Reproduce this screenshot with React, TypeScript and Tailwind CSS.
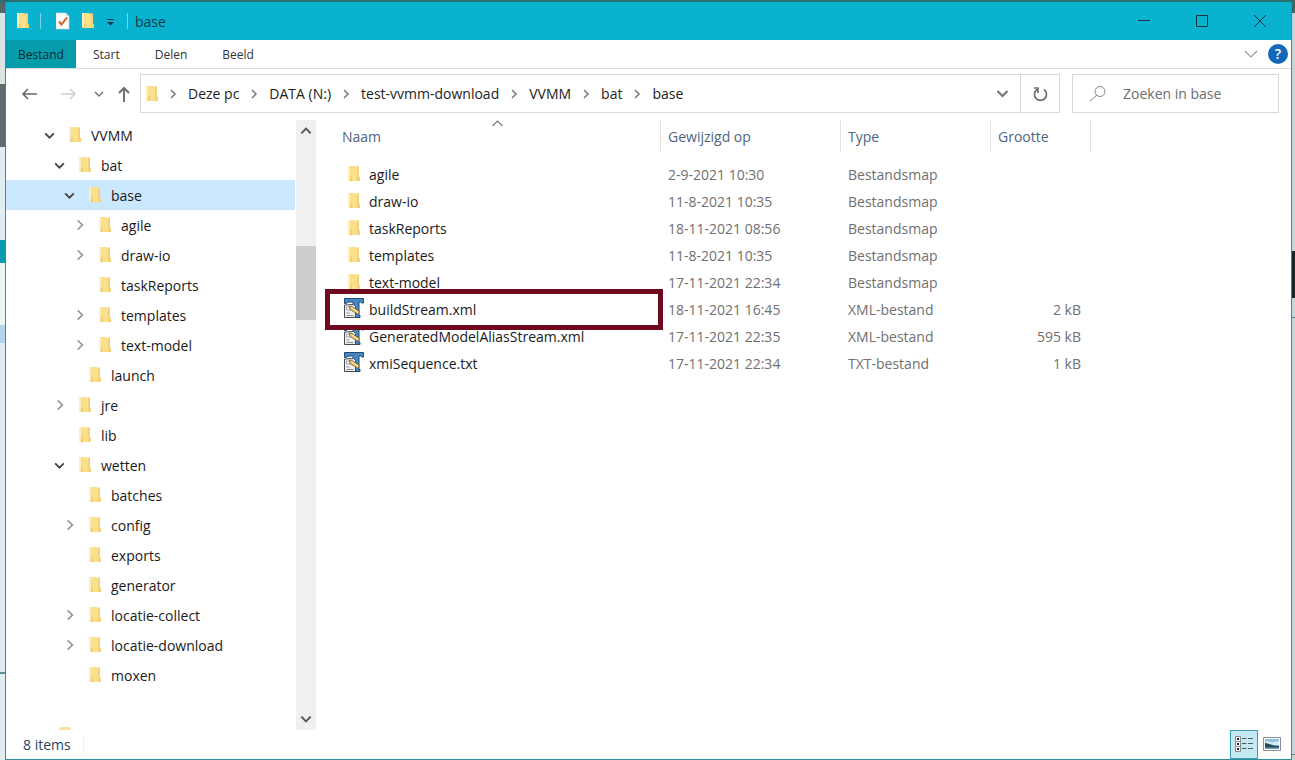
import type { ReactNode } from "react";

type TreeItem = { name: string; level: number; state?: "open" | "closed"; selected?: boolean };

const tree: TreeItem[] = [
  { name: "VVMM", level: 0, state: "open" },
  { name: "bat", level: 1, state: "open" },
  { name: "base", level: 2, state: "open", selected: true },
  { name: "agile", level: 3, state: "closed" },
  { name: "draw-io", level: 3, state: "closed" },
  { name: "taskReports", level: 3 },
  { name: "templates", level: 3, state: "closed" },
  { name: "text-model", level: 3, state: "closed" },
  { name: "launch", level: 2 },
  { name: "jre", level: 1, state: "closed" },
  { name: "lib", level: 1 },
  { name: "wetten", level: 1, state: "open" },
  { name: "batches", level: 2 },
  { name: "config", level: 2, state: "closed" },
  { name: "exports", level: 2 },
  { name: "generator", level: 2 },
  { name: "locatie-collect", level: 2, state: "closed" },
  { name: "locatie-download", level: 2, state: "closed" },
  { name: "moxen", level: 2 },
];

const files = [
  { name: "agile", date: "2-9-2021 10:30", type: "Bestandsmap", size: "" },
  { name: "draw-io", date: "11-8-2021 10:35", type: "Bestandsmap", size: "" },
  { name: "taskReports", date: "18-11-2021 08:56", type: "Bestandsmap", size: "" },
  { name: "templates", date: "11-8-2021 10:35", type: "Bestandsmap", size: "" },
  { name: "text-model", date: "17-11-2021 22:34", type: "Bestandsmap", size: "" },
  { name: "buildStream.xml", date: "18-11-2021 16:45", type: "XML-bestand", size: "2 kB", marked: true },
  { name: "GeneratedModelAliasStream.xml", date: "17-11-2021 22:35", type: "XML-bestand", size: "595 kB" },
  { name: "xmiSequence.txt", date: "17-11-2021 22:34", type: "TXT-bestand", size: "1 kB" },
];

const crumbs = ["Deze pc", "DATA (N:)", "test-vvmm-download", "VVMM", "bat", "base"];

const FolderIcon = () => (
  <svg className="shrink-0" width="14" height="18" viewBox="0 0 14 18">
    <path d="M1 1h7v15H2l-1-1z" fill="#f8df97" />
    <path d="M1 1h2v14.500l-2-.500z" fill="#fdeebf" />
    <path d="M4 1.500h8v10l1 1V16H4z" fill="#fbe08c" />
    <path d="M10 1.500h2v10l1 1V16h-3z" fill="#f4d27a" />
    <path d="M3 12l1.500-2v6.500L3 16z" fill="#f0c865" />
  </svg>
);

// Text editor document icon: blue T behind a notepad with a pencil
const EditorIcon = () => (
  <svg className="mb-[2px] shrink-0" width="20" height="20" viewBox="0 0 20 20">
    <path d="M.5.500h19V5H18l-1.500-1H15v13.500h1v2H9V4H4L2.500 5.500h-2z" fill="#4389c8" stroke="#25476a" />
    <path d="M.5 7l9-.500 2 2v11H.500z" fill="#f0f0ed" stroke="#444b52" />
    <path d="M2.500 17.500h7M2.500 15h3" stroke="#8a9299" fill="none" />
    <path d="M2.500 9h3.500v3H2.500z" fill="#fff" stroke="#8a9299" strokeWidth=".8" />
    <path d="M5.500 8l2.500.500 7.500 5-1.500 3-8-5z" fill="#efc56d" stroke="#5a4626" strokeWidth=".7" />
    <path d="M7.500 9.500l7 5" stroke="#fff0bd" />
  </svg>
);

type ChevronProps = { dir: "up" | "down" | "right"; size?: number; color?: string; weight?: number };

const chevronPaths = { up: "M2 8l4-4 4 4", down: "M2 4l4 4 4-4", right: "M4 2l4 4-4 4" };

const Chevron = ({ dir, size = 12, color = "#444", weight = 1.5 }: ChevronProps) => (
  <svg className="shrink-0" width={size} height={size} viewBox="0 0 12 12" fill="none" stroke={color} strokeWidth={weight}>
    <path d={chevronPaths[dir]} />
  </svg>
);

const TitleBar = () => (
  <header className="flex h-[38px] shrink-0 items-center bg-[#09b3cf] pl-[10px] text-[#123b47]">
    <FolderIcon />
    <div className="ml-[10px] h-4 w-px bg-[#7fd3e0]" />
    <button aria-label="Eigenschappen" className="ml-[15px]">
      <svg width="15" height="18" viewBox="0 0 15 18">
        <path d="M0 1h10l3 3v13H0z" fill="#fdfaf7" stroke="#d9e3e3" strokeWidth=".6" />
        <path d="M10 1v3h3" fill="#cdd6d6" />
        <path d="M3 9.500l2.500 3 5.500-7" fill="none" stroke="#d4612e" strokeWidth="2" />
      </svg>
    </button>
    <button aria-label="Nieuwe map" className="ml-[10px]">
      <FolderIcon />
    </button>
    <button aria-label="Werkbalk aanpassen" className="ml-[11px]">
      <svg width="9" height="10" viewBox="0 0 9 10">
        <path d="M1 3.500h7" stroke="#123b47" />
        <path d="M1 6h7L4.500 9.500z" fill="#123b47" />
      </svg>
    </button>
    <div className="ml-[12px] h-4 w-px bg-[#7fd3e0]" />
    <h1 className="ml-[7px] flex-1 text-[14px]">base</h1>
    <div className="flex h-full pr-[2px]">
      <button aria-label="Minimaliseren" className="flex w-[58px] items-center justify-center">
        <svg width="12" height="12" stroke="#15333c"><path d="M0 5.500h12" /></svg>
      </button>
      <button aria-label="Maximaliseren" className="flex w-[58px] items-center justify-center">
        <svg width="12" height="12" fill="none" stroke="#15333c"><path d="M.5.500h11v11H.500z" /></svg>
      </button>
      <button aria-label="Sluiten" className="flex w-[58px] items-center justify-center">
        <svg width="12" height="12" stroke="#15333c"><path d="M0 0l12 12M12 0L0 12" /></svg>
      </button>
    </div>
  </header>
);

const Ribbon = () => (
  <nav className="flex h-[29px] shrink-0 items-stretch border-b border-[#dadbdc] text-[12px] text-[#333]">
    <button className="w-[70px] bg-[#079cab] pt-[2px] text-[#0c2b33]">Bestand</button>
    <div className="flex gap-[35px] pt-[2px] pl-[17px]">
      <button>Start</button>
      <button>Delen</button>
      <button>Beeld</button>
    </div>
    <div className="flex flex-1 items-center justify-end gap-[8px] pr-[3px]">
      <button aria-label="Lint uitvouwen">
        <Chevron dir="down" size={18} color="#999" weight={0.8} />
      </button>
      <button aria-label="Help" className="size-5 rounded-full bg-[#1368b8] text-[14px] leading-5 font-semibold text-white">
        ?
      </button>
    </div>
  </nav>
);

const AddressBar = () => (
  <div className="flex h-[51px] shrink-0 items-start pt-[5px] pr-[12px] pl-[15px]">
    <div className="flex h-[39px] w-[119px] items-center">
      <button aria-label="Terug">
        <svg width="18" height="16" fill="none" stroke="#666" strokeWidth="1.500"><path d="M16 8H2M7 3L2 8l5 5" /></svg>
      </button>
      <button aria-label="Vooruit" className="ml-[22px]">
        <svg width="18" height="16" fill="none" stroke="#d0d0d0" strokeWidth="1.500"><path d="M0 8h14M9 3l5 5-5 5" /></svg>
      </button>
      <button aria-label="Recente locaties" className="ml-[14px]">
        <Chevron dir="down" size={12} color="#777" />
      </button>
      <button aria-label="Omhoog" className="ml-[11px] pt-[2px]">
        <svg width="16" height="18" fill="none" stroke="#707070" strokeWidth="2"><path d="M8 16V2M3 7l5-5 5 5" /></svg>
      </button>
    </div>
    <div className="flex h-[39px] min-w-0 flex-1 items-center border border-[#d9d9d9] pl-[4px]">
      <FolderIcon />
      <div className="flex flex-1 items-center pl-[2px] text-[14px] text-[#222]">
        {crumbs.map((crumb) => (
          <div key={crumb} className="flex items-center">
            <span className="flex w-[24px] justify-center">
              <Chevron dir="right" size={12} color="#777" />
            </span>
            <button className="px-[3px] whitespace-nowrap">{crumb}</button>
          </div>
        ))}
      </div>
      <button aria-label="Vorige locaties" className="flex h-full w-[36px] items-center justify-center">
        <Chevron dir="down" size={15} color="#777" weight={1.7} />
      </button>
      <button aria-label="Vernieuwen" className="flex h-full w-[39px] items-center justify-center border-l border-[#d9d9d9]">
        <svg width="16" height="18" viewBox="0 0 16 18" fill="none" stroke="#707070" strokeWidth="1.700">
          <path d="M12 4.500a6 6 0 1 1-7 0M2 3h4v5" />
        </svg>
      </button>
    </div>
    <label className="ml-[12px] flex h-[39px] w-[207px] items-center border border-[#d9d9d9] pl-[16px]">
      <svg className="shrink-0" width="18" height="18" fill="none" stroke="#888">
        <circle cx="11" cy="6.500" r="5" />
        <path d="M8 10L1 16" />
      </svg>
      <input
        aria-label="Zoeken in base"
        placeholder="Zoeken in base"
        className="ml-[16px] w-full min-w-0 text-[14px] outline-none placeholder:text-[#6d6d6d]"
      />
    </label>
  </div>
);

const FolderTree = () => (
  <aside className="flex w-[310px] shrink-0">
    <ul className="flex min-w-0 flex-1 flex-col overflow-hidden text-[14px] text-[#1a1a1a]">
      {tree.map((item) => (
        <li
          key={item.name + item.level}
          className={item.selected ? "mr-px h-[30px] shrink-0 bg-[#cce8ff]" : "h-[30px] shrink-0"}
          style={{ paddingLeft: 37 + item.level * 10 }}
        >
          <button className="flex h-full items-center">
            <span className="w-[25px]">
              {item.state === "open" && <Chevron dir="down" size={13} weight={1.7} />}
              {item.state === "closed" && <Chevron dir="right" size={14} color="#999" />}
            </span>
            <FolderIcon />
            <span className="ml-[9px]">{item.name}</span>
          </button>
        </li>
      ))}
      <li className="mt-auto ml-[53px] h-[3px] w-[12px] rounded-t-sm bg-[#f8e19c]" />
    </ul>
    <div className="flex w-[20px] flex-col items-center bg-[#f0f0f0] py-[4px]">
      <Chevron dir="up" size={14} color="#555" weight={1.7} />
      <div className="mt-[108px] h-[74px] w-full bg-[#cdcdcd]" />
      <div className="flex-1" />
      <Chevron dir="down" size={14} color="#555" weight={1.7} />
    </div>
  </aside>
);

const HeaderCell = ({ className, children }: { className: string; children: ReactNode }) => (
  <th className={`${className} p-0 pb-[9px] text-left font-normal`}>
    <div className="relative flex h-8 items-center border-r border-[#e2e2e2]">{children}</div>
  </th>
);

const FileList = () => (
  <main className="min-w-0 flex-1">
    <table className="w-[775px] table-fixed border-collapse text-[14px] text-[#707070]">
      <thead className="text-[#4f6580]">
        <tr>
          <HeaderCell className="w-[345px]">
            <button className="pl-[26px]">Naam</button>
            <span className="absolute -top-[4px] left-[174px]">
              <Chevron dir="up" size={15} color="#777" weight={0.9} />
            </span>
          </HeaderCell>
          <HeaderCell className="w-[180px]">
            <button className="pl-[7px]">Gewijzigd op</button>
          </HeaderCell>
          <HeaderCell className="w-[150px]">
            <button className="pl-[7px]">Type</button>
          </HeaderCell>
          <HeaderCell className="w-[100px]">
            <button className="pl-[7px]">Grootte</button>
          </HeaderCell>
        </tr>
      </thead>
      <tbody>
        {files.map((file) => (
          <tr key={file.name} className="h-[27px]">
            <td className="relative p-0 pl-[28px] text-[#1a1a1a]">
              <div className="flex h-[27px] items-center gap-[5px]">
                <span className="flex w-5 justify-center pr-px pb-[2px]">
                  {file.type === "Bestandsmap" ? <FolderIcon /> : <EditorIcon />}
                </span>
                {file.name}
              </div>
              {file.marked && (
                <div className="absolute -inset-y-[7px] -right-[2px] left-[9px] z-10 border-5 border-[#6f0a1e]" />
              )}
            </td>
            <td className="p-0 pl-[7px]">{file.date}</td>
            <td className="p-0 pl-[7px]">{file.type}</td>
            <td className="p-0 pr-[10px] text-right">{file.size}</td>
          </tr>
        ))}
      </tbody>
    </table>
  </main>
);

const StatusBar = () => (
  <footer className="flex h-[29px] shrink-0 items-center pr-[10px] pl-[17px] text-[14px] text-[#2b4360]">
    <span>8 items</span>
    <div className="ml-[12px] h-[16px] flex-1 border-l border-[#f0f0f0]" />
    <button aria-label="Details" className="flex h-full w-[28px] items-center justify-center border border-[#3d9db3] bg-[#c3e9f3]">
      <svg width="18" height="17" viewBox="0 0 18 17" fill="none" stroke="#8a8a8a">
        <path d="M.5.500h5v5h-5zM.500 5.500h5v5h-5zM.500 10.500h5v5h-5z" fill="#fff" />
        <path d="M2 3h2M2 8h2M2 13h2" stroke="#222" strokeWidth="2" />
        <path d="M7 2.500h4.500M13 2.500h5M7 7.500h4.500M13 7.500h5M7 12.500h4.500M13 12.500h5" stroke="#4b5c63" />
      </svg>
    </button>
    <button aria-label="Grote pictogrammen" className="ml-[5px]">
      <svg width="18" height="15" viewBox="0 0 18 15">
        <path d="M.5.500h17v13H.500z" fill="#fff" stroke="#8b8d99" />
        <path d="M2 2h14v10H2z" fill="#8fc1e0" />
        <path d="M2 5c4-2 6 1 9 0s3 0 5-1v4H2z" fill="#d5eaf3" />
        <path d="M2 6c4 0 6 3 14 3v2H2z" fill="#26495c" />
        <path d="M2 10.500h14V12H2z" fill="#6fa0b8" />
      </svg>
    </button>
  </footer>
);

// Slivers of the desktop that stay visible beside the window
const DesktopLeft = () => (
  <div className="flex w-[5px] shrink-0 flex-col bg-[#e1eeef]">
    <div className="h-[11px] bg-[#536769]" />
    <div className="h-[71px] bg-[#dce5e5]" />
    <div className="h-[63px] bg-[#5e6b6c]" />
    <div className="h-[93px]" />
    <div className="h-[23px] bg-[#079cab]" />
    <div className="h-[62px] bg-[#eef3f3]" />
    <div className="h-[18px] bg-[#b3d5ef]" />
    <div className="h-[329px]" />
    <div className="h-[2px] bg-[#5f8f99]" />
  </div>
);

const DesktopRight = () => (
  <div className="flex w-[3px] shrink-0 flex-col bg-[#c5d5d7]">
    <div className="h-[11px] bg-[#3c6762]" />
    <div className="h-[238px]" />
    <div className="h-[47px] bg-[#192429]" />
    <div className="h-[19px]" />
    <div className="h-px bg-[#3f8d9b]" />
    <div className="flex-1" />
    <div className="h-px bg-[#5a7f87]" />
    <div className="h-[5px]" />
  </div>
);

export default function App() {
  return (
    <div className="flex h-screen flex-col overflow-hidden bg-[#2c6e6c] pt-[2px] font-['Open_Sans',sans-serif]">
      <div className="flex min-h-0 flex-1">
        <DesktopLeft />
        <div className="flex min-w-0 flex-1 flex-col border-x border-b border-[#2f909c] bg-white">
          <TitleBar />
          <Ribbon />
          <AddressBar />
          <div className="flex min-h-0 flex-1">
            <FolderTree />
            <FileList />
          </div>
          <StatusBar />
        </div>
        <DesktopRight />
      </div>
    </div>
  );
}
